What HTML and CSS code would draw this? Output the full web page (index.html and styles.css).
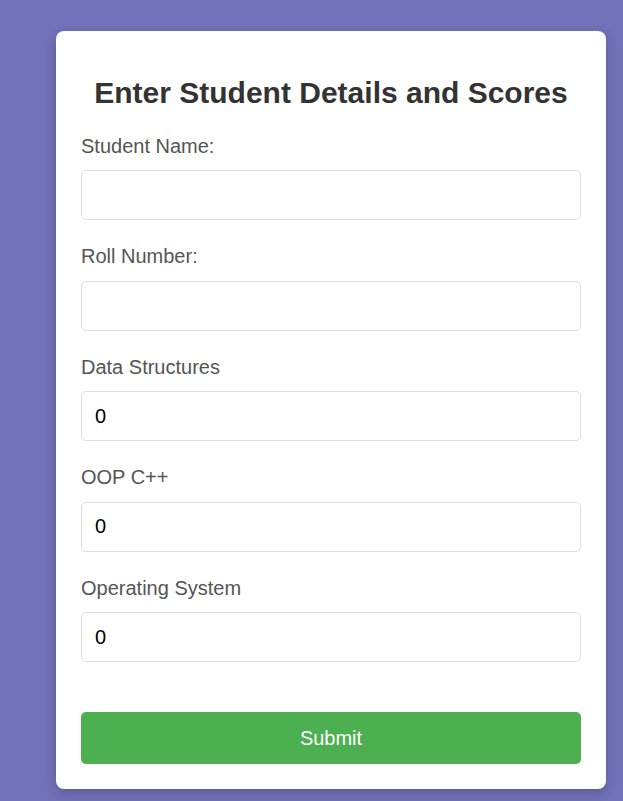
FILE: index.html
```html
<!DOCTYPE html>
<html>
<head>
<meta charset="utf-8">
<link rel="stylesheet" href="styles.css">
</head>
<body>
<div class="card">
  <h2 class="title">Enter Student Details and Scores</h2>
  <form class="form">
    <div class="field">
      <label class="label">Student Name:</label>
      <input class="input" type="text">
    </div>
    <div class="field">
      <label class="label">Roll Number:</label>
      <input class="input" type="text">
    </div>
    <div class="field">
      <label class="label">Data Structures</label>
      <input class="input" type="text" value="0">
    </div>
    <div class="field">
      <label class="label">OOP C++</label>
      <input class="input" type="text" value="0">
    </div>
    <div class="field">
      <label class="label">Operating System</label>
      <input class="input" type="text" value="0">
    </div>
    <button class="submit" type="button">Submit</button>
  </form>
</div>
</body>
</html>
```
FILE: styles.css
```css
html, body {
  margin: 0;
  padding: 0;
}
body {
  background: #7271b9;
  font-family: "Liberation Sans", Arial, sans-serif;
  height: 801px;
  overflow: hidden;
}
.card {
  width: 500px;
  margin: 31px 0 0 56px;
  padding: 25px;
  background: #fff;
  border-radius: 8px;
  box-shadow: 0 4px 12px rgba(0,0,0,0.2);
}
.title {
  margin: 20px 0 0;
  text-align: center;
  font-size: 30px;
  color: #333;
  line-height: 34px;
}
.form {
  display: flex;
  flex-direction: column;
}
.field {
  display: flex;
  flex-direction: column;
}
.label {
  margin-top: 24.5px;
  font-size: 20px;
  line-height: 23px;
  color: #555;
}
.field + .field .label {
  margin-top: 25px;
}
.input {
  margin-top: 12.5px;
  box-sizing: border-box;
  height: 50px;
  width: 100%;
  padding: 0 13px;
  border: 1px solid #ddd;
  border-radius: 5px;
  font-family: "Liberation Sans", Arial, sans-serif;
  font-size: 20px;
  color: #000;
  outline: none;
}
.submit {
  margin-top: 50px;
  height: 52px;
  width: 100%;
  border: none;
  border-radius: 5px;
  background: #4caf50;
  color: #fff;
  font-family: "Liberation Sans", Arial, sans-serif;
  font-size: 20px;
  cursor: pointer;
}
```
